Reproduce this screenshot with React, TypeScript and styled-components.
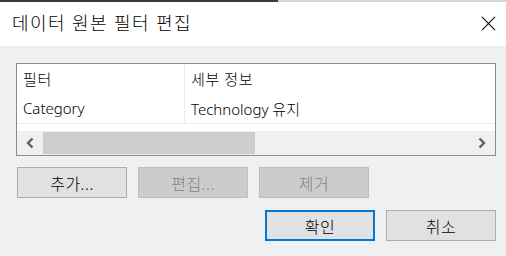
import React, { FC } from 'react';
import styled, { createGlobalStyle, css } from 'styled-components';

const GlobalStyle = createGlobalStyle`
  html, body {
    margin: 0;
    padding: 0;
    background: #f0f0f0;
  }
  body {
    font-family: "Noto Sans", "Noto Sans CJK KR", sans-serif;
    font-weight: 300;
    color: #000000;
  }
`;

type ButtonKind = 'normal' | 'disabled' | 'default';

const rows = [{ filter: 'Category', detail: 'Technology 유지' }];

const App: FC = () => {
  return (
    <Window>
      <GlobalStyle />
      <TopEdge>
        <EdgeDark />
        <EdgeLight />
      </TopEdge>
      <TitleBar>
        <Title>데이터 원본 필터 편집</Title>
        <CloseIcon viewBox="0 0 16 16">
          <path d="M1 1 L15 15 M15 1 L1 15" stroke="#000" strokeWidth="1.1" />
        </CloseIcon>
      </TitleBar>
      <Body>
        <ListBox>
          <Row header>
            <FilterCell>필터</FilterCell>
            <DetailCell>세부 정보</DetailCell>
          </Row>
          {rows.map((row) => (
            <Row key={row.filter}>
              <FilterCell>{row.filter}</FilterCell>
              <DetailCell>{row.detail}</DetailCell>
            </Row>
          ))}
          <Filler>
            <FillerCol />
          </Filler>
          <ScrollBar>
            <ScrollArrow>
              <svg width="10" height="12" viewBox="0 0 10 12">
                <path d="M7.5 1.5 L3 6 L7.5 10.5" stroke="#606060" strokeWidth="2.4" fill="none" />
              </svg>
            </ScrollArrow>
            <Track>
              <Thumb />
            </Track>
            <ScrollArrow>
              <svg width="10" height="12" viewBox="0 0 10 12">
                <path d="M2.5 1.5 L7 6 L2.5 10.5" stroke="#606060" strokeWidth="2.4" fill="none" />
              </svg>
            </ScrollArrow>
          </ScrollBar>
        </ListBox>
        <ActionRow>
          <DialogButton kind="normal">추가...</DialogButton>
          <DialogButton kind="disabled">편집...</DialogButton>
          <DialogButton kind="disabled">제거</DialogButton>
        </ActionRow>
        <FooterRow>
          <DialogButton kind="default">확인</DialogButton>
          <DialogButton kind="normal">취소</DialogButton>
        </FooterRow>
      </Body>
    </Window>
  );
};

const Window = styled.div`
  width: 506px;
  height: 256px;
  display: flex;
  flex-direction: column;
  background: #f0f0f0;
  overflow: hidden;
`;

const TopEdge = styled.div`
  display: flex;
  height: 2px;
`;

const EdgeDark = styled.div`
  width: 278px;
  background: #3a3a3a;
`;

const EdgeLight = styled.div`
  flex: 1;
  background: #d4d4d4;
`;

const TitleBar = styled.div`
  height: 44px;
  display: flex;
  align-items: center;
  justify-content: space-between;
  padding: 0 10px 0 12px;
  background: #ffffff;
`;

const Title = styled.div`
  font-size: 18px;
  letter-spacing: 1.4px;
  line-height: 24px;
  margin-top: -3px;
  color: #000000;
`;

const CloseIcon = styled.svg`
  width: 15px;
  height: 15px;
  margin-top: -2px;
`;

const Body = styled.div`
  display: flex;
  flex-direction: column;
  padding: 17px 10px 0 16px;
`;

const ListBox = styled.div`
  height: 91px;
  display: flex;
  flex-direction: column;
  background: #ffffff;
  border: 1px solid #8a8a8a;
`;

const Row = styled.div<{ header?: boolean }>`
  height: 30px;
  display: flex;
  align-items: center;
  font-size: 15px;
  border-bottom: 1px solid #f0f0f0;

  ${({ header }) =>
    header &&
    css`
      height: 29px;
      border-bottom: none;
      letter-spacing: 0.6px;
    `}
`;

const FilterCell = styled.div`
  width: 168px;
  height: 100%;
  display: flex;
  align-items: center;
  padding-left: 6px;
  border-right: 1px solid #ececec;
  box-sizing: border-box;
`;

const DetailCell = styled.div`
  flex: 1;
  padding-left: 6px;
`;

const Filler = styled.div`
  flex: 1;
  display: flex;
`;

const FillerCol = styled.div`
  width: 168px;
`;

const ScrollBar = styled.div`
  height: 24px;
  display: flex;
  background: #f0f0f0;
`;

const ScrollArrow = styled.div`
  width: 26px;
  display: flex;
  align-items: center;
  justify-content: center;
`;

const Track = styled.div`
  flex: 1;
  display: flex;
`;

const Thumb = styled.div`
  width: 212px;
  margin: 1px 0;
  background: #cdcdcd;
`;

const ActionRow = styled.div`
  display: flex;
  gap: 11px;
  margin-top: 11px;
  padding-left: 1px;
`;

const FooterRow = styled.div`
  display: flex;
  justify-content: flex-end;
  gap: 11px;
  margin-top: 12px;
`;

const DialogButton = styled.div<{ kind: ButtonKind }>`
  width: 110px;
  height: 31px;
  box-sizing: border-box;
  display: flex;
  align-items: center;
  justify-content: center;
  font-size: 16px;
  letter-spacing: 0.5px;
  background: #e1e1e1;
  border: 1px solid #adadad;
  color: #000000;

  ${({ kind }) =>
    kind === 'disabled' &&
    css`
      background: #cccccc;
      border-color: #bfbfbf;
      color: #838383;
    `}

  ${({ kind }) =>
    kind === 'default' &&
    css`
      border: 2px solid #0078d7;
    `}
`;

export default App;
